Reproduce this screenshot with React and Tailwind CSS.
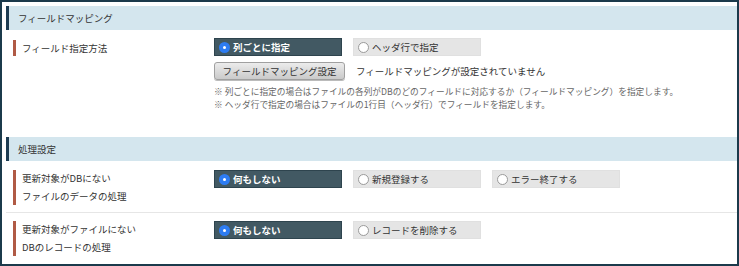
const font = { fontFamily: '"Noto Sans CJK JP", "Noto Sans", sans-serif' }

function SectionHeader({ title }) {
  return (
    <div className="h-[24px] flex items-center bg-[#d4e6ee] border-l-[3px] border-[#1d3c52] pl-[9px] text-[9.5px] text-[#333]">
      {title}
    </div>
  )
}

function Label({ lines }) {
  if (lines.length === 1) {
    return (
      <div className="ml-[7px] mt-[2px] h-[16px] border-l-[3px] border-[#b05a45] pl-[6px] flex items-center text-[9.5px] text-[#333]">
        {lines[0]}
      </div>
    )
  }
  return (
    <div className="ml-[7px] h-[35px] border-l-[3px] border-[#b05a45] pl-[6px] text-[9.5px] leading-[17.5px] text-[#333]">
      {lines.map((l) => (
        <div key={l}>{l}</div>
      ))}
    </div>
  )
}

function Radio({ label, checked }) {
  return (
    <div
      className={
        'w-[128px] h-[18px] flex items-center pl-[4px] gap-[3px] text-[9.5px] ' +
        (checked
          ? 'bg-[#425963] border border-[#2e444e] text-white font-bold'
          : 'bg-[#e5e5e5] border border-[#e0e0e0] text-[#333]')
      }
    >
      {checked ? (
        <span className="w-[11px] h-[11px] rounded-full bg-[#2d7cf2] flex items-center justify-center">
          <span className="w-[3px] h-[3px] rounded-full bg-white" />
        </span>
      ) : (
        <span className="w-[11px] h-[11px] rounded-full bg-white border border-[#9a9a9a]" />
      )}
      <span>{label}</span>
    </div>
  )
}

export default function App() {
  return (
    <div style={font} className="w-[739px] h-[266px] bg-white border-2 border-[#1b3a4b] pl-[4px] pt-[4px] overflow-hidden">
      <SectionHeader title="フィールドマッピング" />
      <div className="flex pt-[8px] pb-[26px]">
        <div className="w-[208px] shrink-0">
          <Label lines={['フィールド指定方法']} />
        </div>
        <div className="flex flex-col">
          <div className="flex gap-[11px]">
            <Radio label="列ごとに指定" checked />
            <Radio label="ヘッダ行で指定" />
          </div>
          <div className="flex items-center gap-[11px] mt-[6px]">
            <button className="w-[131px] h-[18px] rounded-[3px] border border-[#a0a0a0] bg-gradient-to-b from-[#ececec] to-[#cacaca] text-[9.5px] text-[#333] shadow-[0_1px_0_#bbb]">
              フィールドマッピング設定
            </button>
            <span className="text-[9.5px] text-[#333]">フィールドマッピングが設定されていません</span>
          </div>
          <div className="mt-[5px] text-[8.7px] leading-[13px] text-[#666] whitespace-nowrap">
            <div>※ 列ごとに指定の場合はファイルの各列がDBのどのフィールドに対応するか（フィールドマッピング）を指定します。</div>
            <div>※ ヘッダ行で指定の場合はファイルの1行目（ヘッダ行）でフィールドを指定します。</div>
          </div>
        </div>
      </div>
      <SectionHeader title="処理設定" />
      <div className="flex pt-[9px] pb-[7px] border-b border-[#e6e6e6]">
        <div className="w-[208px] shrink-0">
          <Label lines={['更新対象がDBにない', 'ファイルのデータの処理']} />
        </div>
        <div className="flex gap-[11px] items-start">
          <Radio label="何もしない" checked />
          <Radio label="新規登録する" />
          <Radio label="エラー終了する" />
        </div>
      </div>
      <div className="flex py-[8px] border-b border-[#e6e6e6]">
        <div className="w-[208px] shrink-0">
          <Label lines={['更新対象がファイルにない', 'DBのレコードの処理']} />
        </div>
        <div className="flex gap-[11px] items-start">
          <Radio label="何もしない" checked />
          <Radio label="レコードを削除する" />
        </div>
      </div>
    </div>
  )
}
